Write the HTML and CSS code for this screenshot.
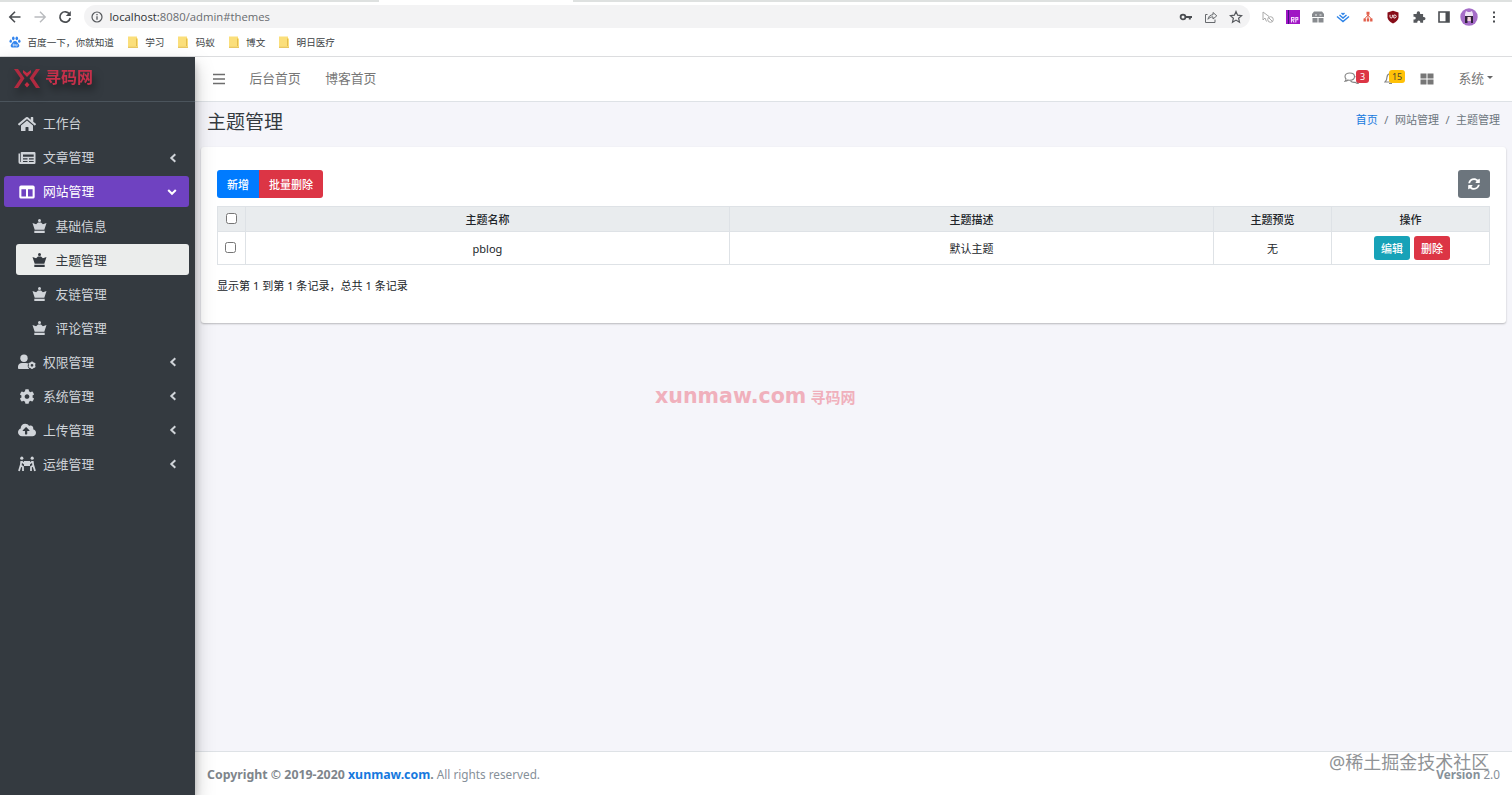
FILE: index.html
```html
<!DOCTYPE html>
<html lang="zh-CN">
<head>
    <meta charset="UTF-8">
    <meta name="viewport" content="width=device-width, initial-scale=1.0">
    <title>主题管理</title>
    <link rel="stylesheet" href="styles.css">
</head>
<body>

    <svg class="defs" width="0" height="0">
        <symbol id="folder" viewBox="0 0 12 12"><path d="M1 .5h9v2h1v9H1z" fill="#fbdf7b"/><path d="M9.5 2.5v7.5M1 11.3h10" stroke="#e3bd4f" fill="none"/></symbol>
        <symbol id="crown" viewBox="0 0 14 14"><circle cx="7" cy="1.6" r="1.5"/><path d="M0 4l3.600 1.300L5.500 3.400h3l1.900 1.900L14 4 11.800 10.800H2.200zM1.800 11.800h10.400V14H1.800z"/></symbol>
        <symbol id="left" viewBox="0 0 8 10"><path d="M6.300 1.200L2.300 5l4 3.800" fill="none" stroke="currentColor" stroke-width="2"/></symbol>
        <symbol id="down" viewBox="0 0 10 8"><path d="M1.200 2L5 5.800 8.800 2" fill="none" stroke="currentColor" stroke-width="2"/></symbol>
    </svg>

    <div class="browser">
        <div class="tabstrip"><div class="tab"></div></div>
        <div class="toolbar">
            <div class="nav-buttons">
                <svg width="14" height="14" viewBox="0 0 14 14"><path d="M12.5 7H2M7 1.8L1.8 7 7 12.2" stroke="#4a4d51" stroke-width="1.6"/></svg>
                <svg width="14" height="14" viewBox="0 0 14 14"><path d="M1.5 7H12M7 1.8L12.2 7 7 12.2" stroke="#b9bbbe" stroke-width="1.4"/></svg>
                <svg width="14" height="14" viewBox="0 0 14 14"><path d="M11.5 4.2A5.2 5.2 0 1 0 12.2 8" stroke="#4a4d51" stroke-width="1.7"/><path d="M12.8 1v5H7.8z" fill="#4a4d51"/></svg>
            </div>
            <div class="address">
                <svg width="12" height="12" viewBox="0 0 12 12"><circle cx="6" cy="6" r="5" stroke="#55585c" stroke-width="1.2"/><path d="M6 5.3v3.5M6 3v1.2" stroke="#55585c" stroke-width="1.3"/></svg>
                <span class="url"><b>localhost:</b>8080/admin#themes</span>
                <div class="address-icons">
                    <svg width="14" height="14" viewBox="0 0 14 14"><circle cx="4" cy="7" r="2.4" stroke="#4a4d51" stroke-width="1.8"/><path d="M6.4 7H13M10.8 7v2.6" stroke="#4a4d51" stroke-width="2"/></svg>
                    <svg width="14" height="14" viewBox="0 0 14 14"><path d="M3.5 4.5H1.5v8h9.5V9.5M4 9.3c.4-3 2.3-4.4 5-4.6V2.5l3.8 3.3L9 9V6.9c-2.3 0-3.8.7-5 2.4z" stroke="#66696d"/></svg>
                    <svg width="14" height="14" viewBox="0 0 14 14"><path d="M7 1.5l1.6 3.7 4 .4-3 2.6.9 4L7 10.1l-3.5 2.1.9-4-3-2.6 4-.4z" stroke="#55585c" stroke-width="1.2"/></svg>
                </div>
            </div>
            <div class="extensions">
                <svg width="14" height="14" viewBox="0 0 14 14"><path d="M2 2v8l2-2 1.5 3.5M2 2l6 4.5" stroke="#aaa"/><circle cx="9.5" cy="9.5" r="2.8" stroke="#aaa"/><path d="M7.5 7.5l4 4" stroke="#aaa"/></svg>
                <svg width="14" height="14" viewBox="0 0 14 14"><path d="M0 0h14v14H0z" fill="#a015c4"/><path d="M2.5 0v14" stroke="#421080"/><path d="M5.5 12.500V7.500H8v2.300H5.500M6.500 9.800l1.700 2.700M9.800 12.500v-5h2v2.300h-2" stroke="#f6d8ff" stroke-width="1.1"/></svg>
                <svg width="14" height="14" viewBox="0 0 14 14"><path d="M3 1.5h8L13 4v3H1V4zM1.5 8h5v4.5h-5zM7.5 8h5v4.5h-5z" fill="#888b8f"/><path d="M4 5h2M8.5 5h2" stroke="#eee"/></svg>
                <svg width="14" height="14" viewBox="0 0 14 14"><path d="M1 6.500l6 5 6-5M3.500 5L7 8 10.500 5M5.500 3L7 4.300 8.500 3" stroke="#2c83e8" stroke-width="1.4"/></svg>
                <svg width="14" height="14" viewBox="0 0 14 14"><path d="M7 2.5v3M7 5L3.500 9M7 5l3.500 4M7 6v4" stroke="#e2604c"/><path d="M5.500 1.800h3v3h-3zM2.500 8.500h2.400V11.500H2.500zM5.800 8.500h2.400V11.500H5.800zM9.100 8.500h2.400V11.500H9.100z" fill="#e2604c"/></svg>
                <svg width="14" height="14" viewBox="0 0 14 14"><path d="M7 .8l5.500 1.800v4.900Q12 11 7 13.500 2 11 1.500 7.500V2.600z" fill="#870c18"/><path d="M4 4.800v2q0 1.200 1.200 1.200t1.200-1.200v-2M7.800 5v3h1q1.500-.4 1.500-1.600T8.800 5z" stroke="#fff" stroke-width=".9"/></svg>
                <svg width="14" height="14" viewBox="0 0 14 14"><path d="M1.500 4h3.200V3a1.700 1.700 0 0 1 3.400 0v1h3v3h.8a1.600 1.600 0 0 1 0 3.200h-.8v2.600H8.300V12a1.500 1.500 0 0 0-3 0v.8H1.500V9.600h.8a1.400 1.400 0 0 0 0-2.900h-.8z" fill="#55585c"/></svg>
                <svg width="14" height="14" viewBox="0 0 14 14"><path d="M2 2h10v10H2z" stroke="#4a4d51" stroke-width="1.6"/><path d="M8.500 2H12v10H8.500z" fill="#4a4d51"/></svg>
                <svg class="avatar" width="18" height="18" viewBox="0 0 18 18"><circle cx="9" cy="9" r="8.700" fill="#a56cc8"/><path d="M5 6l1-3 2 1h2l2-1 1 3v2H5z" fill="#efe2f5"/><path d="M5 8h8v7h-2v-4H7.500v4H5z" fill="#30233b"/><path d="M7.500 9h3.300v4H7.500z" fill="#f3d7d9"/></svg>
                <svg width="14" height="14" viewBox="0 0 14 14"><path d="M6 1.500h2v2H6zM6 6h2v2H6zM6 10.500h2v2H6z" fill="#4a4d51"/></svg>
            </div>
        </div>
        <div class="bookmarks">
            <span><svg width="12" height="12" viewBox="0 0 12 12"><g fill="#3385ee"><ellipse cx="4.300" cy="2.300" rx="1.300" ry="1.900"/><ellipse cx="7.800" cy="2.300" rx="1.300" ry="1.900"/><ellipse cx="1.700" cy="5.200" rx="1.200" ry="1.600"/><ellipse cx="10.300" cy="5.200" rx="1.200" ry="1.600"/><path d="M6 5c2 0 2.200 1.800 3.600 3 1.800 2-.2 4-1.800 3.400H4.200C2.200 12 .8 10 2.400 8 3.800 6.800 4 5 6 5z"/></g><path d="M4.200 8v2h1V8zm2.500 0v2h1.400V8" stroke="#fff" stroke-width=".6"/></svg>百度一下，你就知道</span>
            <span><svg width="12" height="12"><use href="#folder"/></svg>学习</span>
            <span><svg width="12" height="12"><use href="#folder"/></svg>码蚁</span>
            <span><svg width="12" height="12"><use href="#folder"/></svg>博文</span>
            <span><svg width="12" height="12"><use href="#folder"/></svg>明日医疗</span>
        </div>
    </div>

    <div class="wrapper">
        <aside class="sidebar">
            <div class="brand">
                <div class="logo">
                    <svg width="26" height="19" viewBox="0 0 26 19"><path d="M0 0h4l6.500 9.300L4 19H0l6.500-9.700zM26 0h-4l-6.500 9.300L22 19h4l-6.500-9.700z" fill="#b12a40"/><path d="M9 1l4 3 4-3v2.800L13 8 9 3.800zM13 13l2.500 2.800-2.500 2.700-2.500-2.700z" fill="#c22c43"/></svg>
                    <span>寻码网</span>
                </div>
            </div>
            <nav class="menu">
                <a class="item"><svg class="icon" viewBox="0 0 576 512"><path d="M280.37 148.26L96 300.11V464a16 16 0 0 0 16 16l112.06-.29a16 16 0 0 0 15.92-16V368a16 16 0 0 1 16-16h64a16 16 0 0 1 16 16v95.64a16 16 0 0 0 16 16.05L464 480a16 16 0 0 0 16-16V300L295.67 148.26a12.19 12.19 0 0 0-15.3 0zM571.6 251.47L488 182.56V44.05a12 12 0 0 0-12-12h-56a12 12 0 0 0-12 12v72.61L318.47 43a48 48 0 0 0-61 0L4.34 251.47a12 12 0 0 0-1.6 16.9l25.5 31A12 12 0 0 0 45.15 301l235.22-193.74a12.19 12.19 0 0 1 15.3 0L530.9 301a12 12 0 0 0 16.9-1.6l25.5-31a12 12 0 0 0-1.7-16.93z"/></svg><span>工作台</span></a>
                <a class="item"><svg class="icon" viewBox="0 0 18 16"><path fill-rule="evenodd" d="M3.500 2H16.300a1.200 1.200 0 0 1 1.200 1.200v9.600a1.200 1.200 0 0 1-1.200 1.200H2.300a1.800 1.800 0 0 1-1.800-1.800V3.500h1.500v8.500h.7V2.600zM5 4.500v2.300h10.700V4.500zM5 8.300v1.200h4.500V8.300zm6 0v1.200h4.700V8.300zM5 11v1.100h4.500V11zm6 0v1.100h4.700V11z"/></svg><span>文章管理</span><svg class="arrow" width="8" height="10"><use href="#left"/></svg></a>
                <a class="item active"><svg class="icon" viewBox="0 0 18 16"><path fill-rule="evenodd" d="M3 1.500h12A1.700 1.700 0 0 1 16.700 3v10a1.700 1.700 0 0 1-1.700 1.500H3A1.700 1.700 0 0 1 1.300 13V3A1.700 1.700 0 0 1 3 1.500zM3.400 5.200v7.200h4.600V5.200zm6.600 0v7.200h4.600V5.200z"/></svg><span>网站管理</span><svg class="arrow" width="10" height="8"><use href="#down"/></svg></a>
                <a class="item sub"><svg class="icon"><use href="#crown"/></svg><span>基础信息</span></a>
                <a class="item sub current"><svg class="icon"><use href="#crown"/></svg><span>主题管理</span></a>
                <a class="item sub"><svg class="icon"><use href="#crown"/></svg><span>友链管理</span></a>
                <a class="item sub"><svg class="icon"><use href="#crown"/></svg><span>评论管理</span></a>
                <a class="item"><svg class="icon" viewBox="0 0 18 16"><circle cx="6" cy="4.300" r="3.700"/><path d="M0 14.500v-2Q.3 9 4 9h4q1.500 0 2.300.6a4.500 4.500 0 0 0 1 5.400H.8z"/><circle cx="14" cy="11.300" r="2.300" fill="none" stroke="currentColor" stroke-width="1.900"/><path d="M14 7.500v1.500M14 13.500v1.600M10.700 9.400l1.300.8M16 12.400l1.300.8M10.700 13.200l1.300-.8M16 10.200l1.300-.8" stroke="currentColor" stroke-width="1.500"/></svg><span>权限管理</span><svg class="arrow" width="8" height="10"><use href="#left"/></svg></a>
                <a class="item"><svg class="icon cog" viewBox="0 0 512 512"><path d="M487.400 315.700l-42.600-24.600c4.300-23.200 4.300-47 0-70.200l42.600-24.600c4.900-2.800 7.100-8.600 5.500-14-11.100-35.600-30-67.800-54.700-94.600-3.800-4.100-10-5.100-14.800-2.300L380.800 110c-17.900-15.400-38.500-27.300-60.800-35.100V25.800c0-5.600-3.900-10.500-9.400-11.700-36.700-8.200-74.300-7.800-109.200 0-5.500 1.200-9.400 6.100-9.400 11.700V75c-22.200 7.900-42.800 19.800-60.800 35.100L88.700 85.500c-4.900-2.800-11-1.900-14.800 2.300-24.700 26.700-43.600 58.900-54.700 94.600-1.700 5.400.6 11.200 5.500 14L67.300 221c-4.300 23.200-4.300 47 0 70.200l-42.600 24.600c-4.900 2.800-7.100 8.600-5.500 14 11.100 35.600 30 67.800 54.700 94.600 3.800 4.100 10 5.100 14.800 2.300l42.600-24.600c17.900 15.400 38.500 27.300 60.800 35.100v49.200c0 5.600 3.900 10.500 9.400 11.700 36.700 8.200 74.300 7.800 109.200 0 5.500-1.200 9.400-6.100 9.400-11.700v-49.200c22.200-7.900 42.800-19.800 60.800-35.100l42.600 24.600c4.900 2.800 11 1.900 14.800-2.300 24.700-26.700 43.600-58.900 54.700-94.600 1.500-5.500-.7-11.300-5.600-14.100zM256 336c-44.100 0-80-35.900-80-80s35.900-80 80-80 80 35.900 80 80-35.900 80-80 80z"/></svg><span>系统管理</span><svg class="arrow" width="8" height="10"><use href="#left"/></svg></a>
                <a class="item"><svg class="icon" viewBox="0 0 640 512"><path d="M537.600 226.600c4.100-10.700 6.400-22.400 6.400-34.600 0-53-43-96-96-96-19.700 0-38.100 6-53.300 16.200C367 64.200 315.300 32 256 32c-88.400 0-160 71.600-160 160 0 2.700.1 5.400.2 8.100C40.200 219.800 0 273.200 0 336c0 79.500 64.500 144 144 144h368c70.700 0 128-57.300 128-128 0-61.900-44-113.600-102.400-125.400zM393.400 288H328v112c0 8.800-7.200 16-16 16h-48c-8.800 0-16-7.200-16-16V288h-65.400c-14.300 0-21.400-17.200-11.300-27.300l105.400-105.400c6.200-6.200 16.400-6.200 22.600 0l105.400 105.400c10.100 10.100 2.900 27.300-11.300 27.300z"/></svg><span>上传管理</span><svg class="arrow" width="8" height="10"><use href="#left"/></svg></a>
                <a class="item"><svg class="icon" viewBox="0 0 18 16"><circle cx="3.800" cy="2.200" r="1.600"/><circle cx="14.200" cy="2.200" r="1.600"/><path d="M6 5h6v5H6z"/><path d="M3.300 5L2.800 9.500 5 11v4M2.800 9L1 15M3.500 5.500L7 8M14.700 5l.5 4.500L13 11v4M15.200 9L17 15M14.500 5.500L11 8" fill="none" stroke="currentColor" stroke-width="1.800"/></svg><span>运维管理</span><svg class="arrow" width="8" height="10"><use href="#left"/></svg></a>
            </nav>
        </aside>

        <div class="main">
            <header class="topbar">
                <svg width="12" height="12" viewBox="0 0 12 12"><path d="M0 1.500h12M0 6h12M0 10.500h12" stroke="#6d6d6d" stroke-width="1.500"/></svg>
                <a>后台首页</a>
                <a>博客首页</a>
                <div class="topbar-right">
                    <div class="notice">
                        <svg width="15" height="13" viewBox="0 0 15 13"><path d="M5.800 1C8.500 1 10.500 2.500 10.500 4.600S8.500 8.300 5.800 8.300q-1 0-1.800-.3Q2.800 9.200 1 9.300 2 8.200 2 7 1 6 1 4.600C1 2.500 3.100 1 5.800 1zM11.500 4.500q2.500.8 2.500 3 0 1.200-.9 2 .1 1.200.9 2-1.500-.1-2.700-1.200-3.300.5-4.800-1.500" stroke="#858585" stroke-width="1.100"/></svg>
                        <span class="badge red">3</span>
                    </div>
                    <div class="notice">
                        <svg width="13" height="13" viewBox="0 0 13 13"><path d="M1 10Q3 8 3 5q.2-3 3.500-3.500Q9.800 2 10 5q0 3 2 5zM5 11.500h3" stroke="#858585" stroke-width="1.200"/></svg>
                        <span class="badge yellow">15</span>
                    </div>
                    <svg class="tiles" width="14" height="12" viewBox="0 0 14 12"><path d="M.5.500h6v5h-6zM7.500.500h6v5h-6zM.5 6.500h6v5h-6zM7.500 6.500h6v5h-6z" fill="#777"/></svg>
                    <a class="system">系统<i></i></a>
                </div>
            </header>

            <section class="content">
                <div class="page-header">
                    <h1>主题管理</h1>
                    <div class="breadcrumb"><a>首页</a><span>/</span>网站管理<span>/</span>主题管理</div>
                </div>
                <div class="card">
                    <div class="actions">
                        <div class="btn-group"><button class="btn primary">新增</button><button class="btn danger">批量删除</button></div>
                        <button class="btn refresh"><svg width="12" height="12" viewBox="0 0 512 512"><path fill="#fff" d="M370.720 133.280C339.458 104.008 298.888 87.962 255.848 88c-77.458.068-144.328 53.178-162.791 126.850-1.344 5.363-6.122 9.150-11.651 9.150H24.103c-7.498 0-13.194-6.807-11.807-14.176C33.933 94.924 134.813 8 256 8c66.448 0 126.791 26.136 171.315 68.685L463.030 40.970C478.149 25.851 504 36.559 504 57.941V192c0 13.255-10.745 24-24 24H345.941c-21.382 0-32.090-25.851-16.971-40.971l41.750-41.749zM32 296h134.059c21.382 0 32.090 25.851 16.971 40.971l-41.750 41.750c31.262 29.273 71.835 45.319 114.876 45.280 77.418-.07 144.315-53.144 162.787-126.849 1.344-5.363 6.122-9.150 11.651-9.150h57.304c7.498 0 13.194 6.807 11.807 14.176C478.067 417.076 377.187 504 256 504c-66.448 0-126.791-26.136-171.315-68.685L48.970 471.030C33.851 486.149 8 475.441 8 454.059V320c0-13.255 10.745-24 24-24z"/></svg></button>
                    </div>
                    <table>
                        <colgroup><col class="c-check"><col class="c-name"><col class="c-name"><col class="c-preview"><col></colgroup>
                        <thead>
                            <tr><th class="check-all"><input type="checkbox"></th><th>主题名称</th><th>主题描述</th><th>主题预览</th><th>操作</th></tr>
                        </thead>
                        <tbody>
                            <tr><td class="check"><input type="checkbox"></td><td>pblog</td><td>默认主题</td><td>无</td><td><div class="row-actions"><button class="btn small info">编辑</button><button class="btn small danger">删除</button></div></td></tr>
                        </tbody>
                    </table>
                    <p class="summary">显示第 1 到第 1 条记录，总共 1 条记录</p>
                </div>
            </section>

            <footer class="footer">
                <div><strong>Copyright © 2019-2020 <a>xunmaw.com</a>.</strong> All rights reserved.</div>
                <div class="version"><b>Version</b> 2.0</div>
            </footer>
        </div>
    </div>

    <div class="watermark">xunmaw.com <span>寻码网</span></div>
    <div class="community">@稀土掘金技术社区</div>

</body>
</html>
```
FILE: styles.css
```css
* { box-sizing: border-box; }
body { margin: 0; height: 795px; overflow: hidden; display: flex; flex-direction: column; font-family: "Noto Sans", "Noto Sans CJK SC", sans-serif; font-size: 12px; color: #212529; background: #fff; }
svg { display: block; flex: none; fill: none; }
.defs { position: absolute; }
button { font-family: inherit; border: 0; }

/* browser bars */
.browser { height: 57px; border-bottom: 1px solid #dcdddf; background: #fff; }
.tabstrip { height: 2px; background: #dee1e0; padding-left: 379px; }
.tab { width: 194px; height: 2px; background: #fff; }
.toolbar { height: 29px; display: flex; align-items: center; padding-left: 8px; }
.nav-buttons { display: flex; gap: 11px; width: 76px; }
.address { width: 1166px; height: 23px; border-radius: 12px; background: #f3f3f4; display: flex; align-items: center; padding-left: 7px; }
.url { margin-left: 6.5px; margin-top: -1px; color: #696c70; font-family: "Open Sans", sans-serif; font-size: 11.3px; }
.url b { font-weight: normal; color: #303236; }
.address-icons { display: flex; gap: 11px; margin-left: auto; padding-right: 7px; }
.extensions { display: flex; align-items: center; gap: 11.1px; margin-left: 11px; }
.avatar { margin: 0 -2px; }
.bookmarks { height: 22px; display: flex; align-items: center; gap: 12.8px; padding-left: 9px; font-size: 9.6px; color: #3c3f43; }
.bookmarks span { display: flex; align-items: center; gap: 6.5px; }

/* sidebar */
.wrapper { flex: 1; display: flex; min-height: 0; }
.sidebar { width: 195px; flex: none; background: #343a40; color: #d0d4d9; box-shadow: 0 9px 18px rgba(0,0,0,.25), 0 6px 7px rgba(0,0,0,.2); z-index: 2; }
.brand { height: 45px; border-bottom: 1px solid #4b545c; padding: 11px 0 0 14px; }
.logo { display: flex; align-items: center; gap: 5px; width: 82px; height: 21px; font-size: 16px; line-height: 20px; font-weight: bold; color: #c5304a; filter: drop-shadow(2px 6px 4px rgba(0,0,0,.5)); white-space: nowrap; }
.logo span { padding-bottom: 4px; }
.menu { padding: 6px 6px 0 4px; display: flex; flex-direction: column; gap: 3px; }
.item { height: 31.1px; padding: 0 11px 0 14px; display: flex; align-items: center; border-radius: 3px; font-size: 12.8px; white-space: nowrap; }
.item span { padding-bottom: 1.5px; }
.item .icon { width: 18px; height: 16px; margin-right: 7px; fill: currentColor; }
.item .cog { height: 15px; }
.item .arrow { margin-left: auto; margin-right: 1px; }
.item.active { background: #6f42c1; color: #fff; }
.item.sub { margin-left: 12px; padding-left: 16px; }
.item.sub .icon { width: 15px; height: 14px; margin-right: 8.5px; }
.item.current { background: #ebedec; color: #343a40; }

/* main area */
.main { flex: 1; min-width: 0; display: flex; flex-direction: column; background: #f5f5fa; }
.topbar { height: 45px; background: #fff; border-bottom: 1px solid #dee2e6; display: flex; align-items: center; padding: 0 19px 0 18px; font-size: 12.8px; color: #777; }
.topbar a { padding-bottom: 3px; }
.topbar > a { margin-left: 24.5px; }
.topbar-right { display: flex; align-items: center; margin-left: auto; }
.notice { position: relative; width: 40px; height: 14px; }
.badge { position: absolute; left: 12px; top: -2px; height: 13px; line-height: 13px; padding: 0 3.5px; border-radius: 3px; font-size: 9px; }
.badge.red { background: #dc3545; color: #fff; }
.badge.yellow { left: 5px; padding: 0 2.5px; background: #ffc107; color: #4d4527; }
.tiles { margin-left: -4px; }
.system { display: flex; align-items: center; gap: 3px; margin-left: 24px; }
.system i { border: 3px solid transparent; border-top-color: #666; border-bottom: 0; }
.content { flex: 1; padding: 0 6px; }
.page-header { height: 45px; display: flex; justify-content: space-between; padding: 0 6px; }
h1 { margin: 6px 0 0; font-size: 19px; line-height: 28px; font-weight: 400; color: #343a40; }
.breadcrumb { padding-top: 8.5px; font-size: 11px; line-height: 18px; color: #6c757d; }
.breadcrumb span { margin: 0 6.5px; }
.breadcrumb a, .footer a { color: #1679de; }
.card { height: 176px; background: #fff; border-radius: 3px; box-shadow: 0 1px 2px rgba(0,0,0,.25); padding: 23px 16px 0; }
.actions { display: flex; justify-content: space-between; height: 36px; }
.btn-group { display: flex; }
.btn { height: 28px; padding: 0; font-size: 11px; font-weight: 500; color: #fff; border-radius: 3px; display: flex; align-items: center; justify-content: center; }
.primary { width: 42px; background: #007bff; border-radius: 3px 0 0 3px; }
.danger { background: #dc3545; }
.btn-group .danger { width: 64px; border-radius: 0 3px 3px 0; }
.refresh { width: 32px; background: #6c757d; }
table { width: 100%; table-layout: fixed; border-collapse: collapse; font-size: 11px; text-align: center; }
th, td { border: 1px solid #dee2e6; padding: 0; }
th { height: 25px; background: #e9ecee; font-weight: 500; }
td { height: 33px; }
.c-check { width: 28px; }
.c-name { width: 484px; }
.c-preview { width: 118px; }
input { width: 11px; height: 11px; margin: 0; display: inline-block; vertical-align: middle; }
th.check-all { padding-bottom: 4px; }
td.check { padding: 0 3px 4px 0; }
.row-actions { display: flex; justify-content: center; gap: 4px; padding-left: 3px; }
.small { width: 36px; height: 24px; }
.info { background: #17a2b8; }
.summary { margin: 12px 0 0; font-size: 11.05px; line-height: 18px; }
.footer { height: 44px; background: #fff; border-top: 1px solid #dee2e6; padding: 1px 12px 0; display: flex; justify-content: space-between; align-items: center; font-size: 11.75px; color: #869099; }
.footer strong { font-size: 12.35px; color: #7e858b; }

/* marks over the page */
.watermark { position: absolute; left: 655px; top: 382px; font-family: "DejaVu Sans", "Noto Sans CJK SC", sans-serif; font-size: 20.6px; line-height: 28px; font-weight: bold; color: #f0b0bc; white-space: nowrap; }
.watermark span { font-size: 15px; margin-left: -3px; }
.community { position: absolute; left: 1329px; top: 750px; font-size: 18px; line-height: 25px; color: #909396; white-space: nowrap; z-index: 3; }
```
